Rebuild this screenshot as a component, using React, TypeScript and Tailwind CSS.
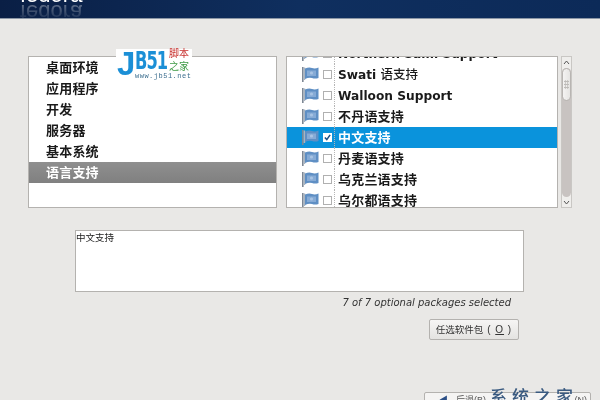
import React from 'react';

const categories = ['桌面环境', '应用程序', '开发', '服务器', '基本系统', '语言支持'];

const languages = [
  { name: 'Northern Sami Support', bold: true },
  { name: 'Swati ', suffix: '语支持', bold: true },
  { name: 'Walloon Support', bold: true },
  { name: '不丹语支持' },
  { name: '中文支持', selected: true },
  { name: '丹麦语支持' },
  { name: '乌克兰语支持' },
  { name: '乌尔都语支持' },
];

const FlagIcon = () => (
  <svg width="17" height="15" viewBox="0 0 17 15" className="shrink-0">
    <rect x="0" y="0" width="1.6" height="15" fill="#7d8794" />
    <rect x="1.6" y="0.5" width="1.6" height="12.5" fill="#a9b4c0" />
    <path d="M3 1.5 Q7 0 10 1 T16.5 0.5 V11 Q13 12 10 11 T3 12 Z" fill="#5f8fc4" />
    <path d="M5 3.5 H14 V9 H5 Z" fill="#86abd6" />
    <circle cx="9.5" cy="6" r="1.6" fill="#a8c4e4" />
  </svg>
);

const Checkbox = ({ checked }: { checked?: boolean }) => (
  <span className={`w-[9px] h-[9px] shrink-0 flex items-center justify-center border ${checked ? 'border-white bg-white' : 'border-[#b0b0b0] bg-white'}`}>
    {checked && (
      <svg width="7" height="7" viewBox="0 0 8 8" className="shrink-0">
        <path d="M1 4 L3.2 6.4 L7 1" fill="none" stroke="#1c4f86" strokeWidth="1.8" />
      </svg>
    )}
  </span>
);

export default function App() {
  return (
    <div className="relative w-[600px] h-[400px] overflow-hidden bg-[#e9e8e6] font-['Liberation_Sans','Noto_Sans_CJK_SC',sans-serif] text-[#1a1a1a] blur-[0.35px]">
      {/* Header */}
      <div className="relative h-[19px] overflow-hidden bg-gradient-to-r from-[#0a1f45] via-[#0f2f5f] to-[#0c2a58] border-b border-[#8c97a6]">
        <div className="absolute left-[20px] -top-[15px] text-[22px] leading-[20px] text-white">fedora</div>
        <div className="absolute left-[20px] top-[2px] text-[22px] leading-[20px] text-white opacity-40 -scale-y-100 [mask-image:linear-gradient(to_top,black,transparent)]">fedora</div>
      </div>

      {/* Lists */}
      <div className="flex pl-[28px] pt-[37px]">
        <div className="w-[249px] h-[152px] bg-white border border-[#b4b2af] overflow-hidden">
          {categories.map((c, i) => (
            <div
              key={c}
              className={`h-[21px] pl-[17px] flex items-center text-[13px] font-semibold tracking-[0.2px] ${i === 5 ? 'bg-gradient-to-b from-[#8f8f8f] to-[#808080] text-white' : ''}`}
            >
              {c}
            </div>
          ))}
        </div>

        <div className="ml-[9px] w-[272px] h-[152px] bg-white border border-[#b4b2af] overflow-hidden">
          <div className="-mt-[14px]">
            {languages.map((l) => (
              <div
                key={l.name}
                className={`h-[21px] pl-[15px] flex items-center ${l.selected ? 'bg-[#0a93dc] text-white' : ''} ${l.bold ? 'font-["DejaVu_Sans","Noto_Sans_CJK_SC",sans-serif] font-bold text-[12.2px]' : 'font-semibold text-[13px] tracking-[0.2px]'}`}
              >
                <FlagIcon />
                <span className="ml-[4px] flex">
                  <Checkbox checked={l.selected} />
                </span>
                <span className="ml-[2px] h-full border-l border-dotted border-[#b5b5b5]" />
                <span className={`ml-[3px] whitespace-pre ${l.bold ? 'pt-[2px]' : ''}`}>
                  {l.name}
                  {l.suffix && <span className="text-[12.5px] font-medium">{l.suffix}</span>}
                </span>
              </div>
            ))}
          </div>
        </div>

        {/* Scrollbar */}
        <div className="ml-[3px] w-[11px] h-[152px] flex flex-col bg-[#efeeec] border border-[#c9c7c4]">
          <div className="h-[10px] flex items-center justify-center">
            <svg width="7" height="5" viewBox="0 0 7 5"><path d="M1 4 L3.5 1 L6 4" fill="none" stroke="#555" strokeWidth="1" /></svg>
          </div>
          <div className="flex-1 mt-[1px] rounded-[5px] bg-[#c8c3c1]">
            <div className="h-[33px] rounded-[5px] bg-gradient-to-r from-[#f4f3f2] to-[#e6e5e3] border border-[#b8b5b2] flex items-center justify-center">
              <div className="w-[5px] h-[9px] bg-[radial-gradient(#bdbbb8_1px,transparent_1px)] bg-[length:2.5px_3px]" />
            </div>
          </div>
          <div className="h-[10px] flex items-center justify-center">
            <svg width="7" height="5" viewBox="0 0 7 5"><path d="M1 1 L3.5 4 L6 1" fill="none" stroke="#555" strokeWidth="1" /></svg>
          </div>
        </div>
      </div>

      {/* Description */}
      <div className="ml-[75px] mt-[22px] w-[449px] h-[62px] bg-white border border-[#b4b2af] text-[9.5px] leading-[14px]">
        中文支持
      </div>

      <div className="w-[511px] mt-[3px] text-right text-[10px] leading-[15px] italic text-[#333] font-['DejaVu_Sans',sans-serif]">
        7 of 7 optional packages selected
      </div>

      <div className="w-[519px] mt-[9px] flex justify-end">
        <button className="w-[90px] h-[21px] rounded-[2px] border border-[#b4b2af] bg-gradient-to-b from-[#f6f5f4] to-[#e4e3e1] text-[9.5px] text-[#333] whitespace-nowrap">
          任选软件包<span className="tracking-[1px] text-[10px]"> ( <span className="underline">O</span> )</span>
        </button>
      </div>

      {/* Bottom buttons, cut off by the window */}
      <div className="absolute left-[424px] top-[392px] w-[167px] h-[20px] rounded-[2px] border border-[#b4b2af] bg-[#f5f4f3] pl-[14px] pr-[3px] flex justify-between text-[9px] leading-[14px] text-[#555]">
        <span className="flex gap-[8px]">
          <span className="text-[#2b4f86]">◀</span>
          <span>后退(B)</span>
        </span>
        <span>(N)</span>
      </div>
      <div className="absolute left-[490px] top-[386px] flex gap-[5px] text-[17px] leading-[20px] font-medium text-[#3a5a80] font-['Noto_Sans_CJK_SC',sans-serif] whitespace-nowrap">
        <span>系</span><span>统</span><span>之</span><span>家</span>
      </div>

      {/* Watermark logo */}
      <div className="absolute left-[116px] top-[49px] w-[76px] h-[33px] bg-white">
        <div className="absolute left-[1px] -top-[1px] text-[33px] leading-[32px] font-bold text-[#1b8fd6]">J</div>
        <div className="absolute left-[19px] -top-[1px] text-[25px] leading-[26px] font-bold text-[#1b8fd6] font-['DejaVu_Sans',sans-serif] tracking-[-1.5px] scale-x-[0.65] origin-left">B51</div>
        <div className="absolute left-[53px] -top-[1px] text-[10px] leading-[12px] text-[#c8312e] whitespace-nowrap">脚本</div>
        <div className="absolute left-[53px] top-[12px] text-[10px] leading-[12px] text-[#3e9a45] whitespace-nowrap">之家</div>
        <div className="absolute left-[19px] top-[23px] text-[7px] leading-[9px] tracking-[0.5px] text-[#3d6f8f] font-['Liberation_Mono',monospace] whitespace-nowrap">www.jb51.net</div>
      </div>
    </div>
  );
}
